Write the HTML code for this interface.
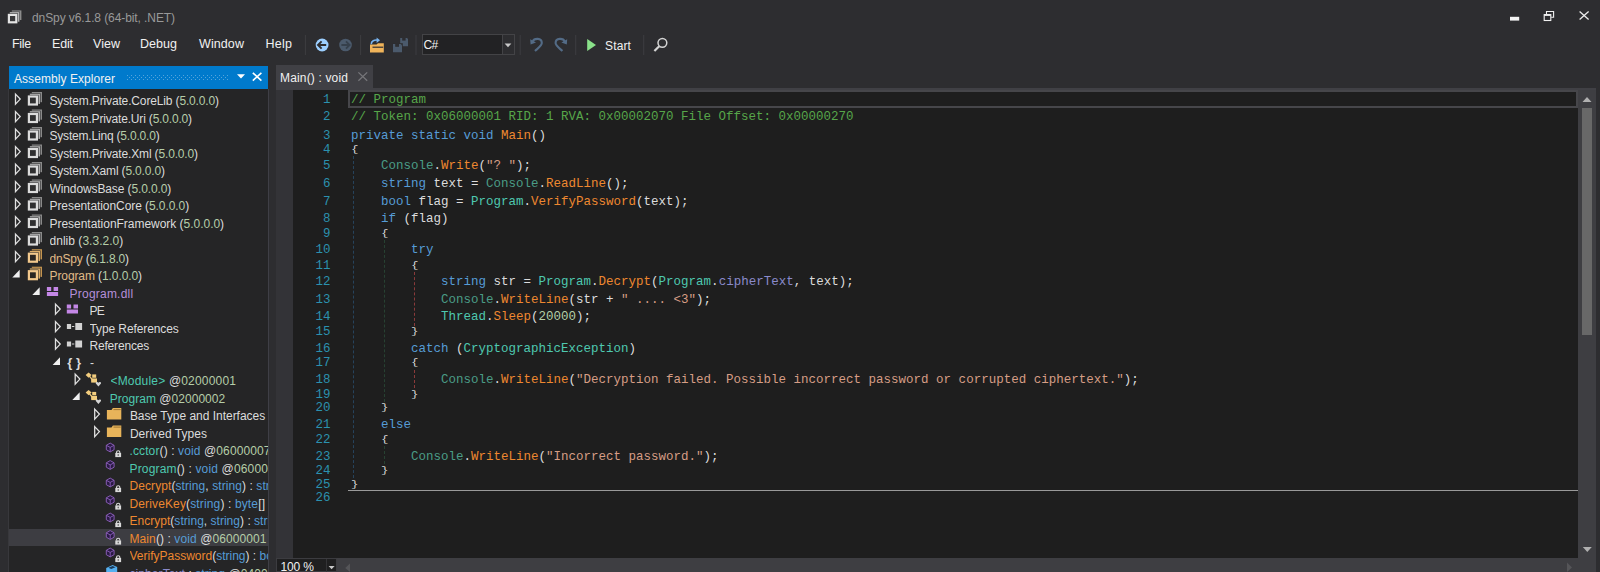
<!DOCTYPE html><html><head><meta charset="utf-8"><title>dnSpy</title><style>
html,body{margin:0;padding:0;background:#2d2d30;}
body{width:1600px;height:572px;position:relative;overflow:hidden;font-family:"Liberation Sans",sans-serif;}
.ab{position:absolute;}
.tx{position:absolute;white-space:pre;line-height:20px;height:20px;font-family:"Liberation Sans",sans-serif;}
.cd{position:absolute;white-space:pre;line-height:20px;height:20px;font-family:"Liberation Mono",monospace;font-size:12.5px;}
.num{position:absolute;white-space:pre;line-height:20px;height:20px;font-family:"Liberation Mono",monospace;font-size:12.5px;color:#2b91af;text-align:right;width:40px;left:290.5px;}

.c{color:#57a64a}
.k{color:#569cd6}
.t{color:#4ec9b0}
.T{color:#4a9c86}
.m{color:#ee8830}
.p{color:#dcdcdc}
.s{color:#d69d85}
.n{color:#b5cea8}
.f{color:#8a8acb}
.y{color:#e0bb88}
.u{color:#b58fd9}
.w{color:#f1f1f1}
.g{color:#999999}
.ln{color:#2b91af}
</style></head><body>
<div class="ab" style="left:9px;top:66px;width:259px;height:23px;background:#007acc"></div>
<div class="ab" id="tree" style="left:9px;top:89px;width:259px;height:483px;background:#252526;overflow:hidden"></div>
<div class="ab" style="left:9px;top:529px;width:259px;height:17px;background:#3d3d42"></div>
<div class="ab" style="left:268px;top:89px;width:1px;height:483px;background:#3f3f46"></div>
<div class="ab" style="left:8px;top:89px;width:1px;height:483px;background:#38383c"></div>
<div class="ab" style="left:275.5px;top:65px;width:97.5px;height:25px;background:#404045"></div>
<div class="ab" style="left:275.5px;top:88px;width:1320.5px;height:2px;background:#404045"></div>
<div class="ab" style="left:275.5px;top:90px;width:17.5px;height:468px;background:#333337"></div>
<div class="ab" style="left:293px;top:90px;width:1285px;height:468px;background:#1e1e1e"></div>
<div class="ab" style="left:348px;top:90px;width:1226px;height:14px;border:2px solid #46464a;background:#1e1e1e"></div>
<div class="ab" style="left:348px;top:490px;width:1230px;height:1px;background:#9a9a9a"></div>
<div class="ab" style="left:1578px;top:90px;width:18px;height:482px;background:#3e3e42"></div>
<div class="ab" style="left:1582px;top:107.5px;width:10px;height:227.5px;background:#686868"></div>
<div class="ab" style="left:337px;top:558px;width:1241px;height:14px;background:#3e3e42"></div>
<div class="ab" style="left:275.5px;top:558px;width:61.5px;height:14px;background:#1f1f20;border:1px solid #3c3c40;box-sizing:border-box"></div>
<div class="ab" style="left:421.5px;top:34px;width:93.5px;height:21px;background:#222224;border:1px solid #434346;box-sizing:border-box"></div>
<div class="ab" style="left:501.5px;top:35px;width:12.5px;height:19px;background:#2d2d30;border-left:1px solid #434346;box-sizing:border-box"></div>
<svg class="ab" style="left:0;top:0" width="1600" height="572" viewBox="0 0 1600 572">
<rect x="11.8" y="10.4" width="9.6" height="9.6" fill="#8c8c8c"/>
<rect x="9.3" y="11.6" width="10.6" height="10.6" fill="#2d2d30"/>
<rect x="9.8" y="12.1" width="9.6" height="9.6" fill="#b4b4b4"/>
<rect x="7.3" y="13.3" width="10.6" height="10.6" fill="#2d2d30"/>
<rect x="7.8" y="13.8" width="9.6" height="9.6" fill="#e4e4e4"/>
<rect x="10.0" y="16.0" width="5.2" height="5.2" fill="#38383a"/>
<rect x="1510" y="16.8" width="9.2" height="3.8" fill="#f4f4f4"/>
<g fill="none" stroke="#f0f0f0" stroke-width="1.1"><path d="M1546.5 14V11.5H1553.6V17.3H1551.2"/><rect x="1544.2" y="14.6" width="6.6" height="5.9"/><path d="M1544.2 15.1H1550.8" stroke-width="1.6"/></g>
<path d="M1579.6 11.6L1588.6 19.6M1588.6 11.6L1579.6 19.6" stroke="#ececec" stroke-width="1.3" fill="none"/>
<rect x="304.9" y="35" width="1" height="20" fill="#3d3d41"/>
<rect x="360.1" y="35" width="1" height="20" fill="#3d3d41"/>
<rect x="415.5" y="35" width="1" height="20" fill="#3d3d41"/>
<rect x="519.7" y="35" width="1" height="20" fill="#3d3d41"/>
<rect x="575.2" y="35" width="1" height="20" fill="#3d3d41"/>
<rect x="643.2" y="35" width="1" height="20" fill="#3d3d41"/>
<circle cx="322.1" cy="45" r="6.4" fill="#9ccfff"/>
<path d="M318.2 45H326.2M321.6 41.4L318 45L321.6 48.6" stroke="#2d2d30" stroke-width="1.9" fill="none"/>
<circle cx="345.5" cy="45" r="6.3" fill="#4b5a6c"/>
<path d="M341.4 45H349.4M346 41.4L349.6 45L346 48.6" stroke="#36404c" stroke-width="1.9" fill="none"/>
<path d="M370 52.5V44.6H376.5L378 43.2H383.8V52.5Z" fill="#f0b45a"/>
<path d="M372.5 47.2H383.2" stroke="#2d2d30" stroke-width="1.2"/>
<path d="M371.3 44.3C371 40.8 374.5 39.6 378 40.2" stroke="#78b4f0" stroke-width="1.6" fill="none"/><path d="M376.6 37.6L380 40.3L376.6 43Z" fill="#78b4f0"/>
<path d="M400.2 38H407L408 39V46.2H400.2Z" fill="#4b5a6c"/><rect x="402.2" y="38" width="3.4" height="2.6" fill="#2d2d30"/>
<rect x="392.4" y="43.2" width="10.4" height="9.6" fill="#2d2d30"/>
<path d="M393 44H400.8L402 45.2V52.2H393Z" fill="#4b5a6c"/><rect x="395.2" y="44" width="3.8" height="2.8" fill="#2d2d30"/>
<path d="M504.6 43.6H511.4L508 47.2Z" fill="#c8c8c8"/>
<path d="M532.6 41.6C534 38 541.8 37.4 541.8 43C541.8 45.6 538.2 48 535 51" stroke="#536b86" stroke-width="2.1" fill="none"/><path d="M530.2 39.2L530.6 44.6L536 42.4Z" fill="#536b86"/>
<path d="M564.8 41.6C563.4 38 555.6 37.4 555.6 43C555.6 45.6 559.2 48 562.4 51" stroke="#536b86" stroke-width="2.1" fill="none"/><path d="M567.2 39.2L566.8 44.6L561.4 42.4Z" fill="#536b86"/>
<path d="M587.2 39L596 45L587.2 51Z" fill="#8ae28a"/>
<circle cx="662.4" cy="42.8" r="4.4" fill="none" stroke="#d4d4d4" stroke-width="1.5"/><path d="M659.2 46.2L654.4 51" stroke="#d4d4d4" stroke-width="2.2"/>
<path d="M127 75h1v1h-1zM131 75h1v1h-1zM135 75h1v1h-1zM139 75h1v1h-1zM143 75h1v1h-1zM147 75h1v1h-1zM151 75h1v1h-1zM155 75h1v1h-1zM159 75h1v1h-1zM163 75h1v1h-1zM167 75h1v1h-1zM171 75h1v1h-1zM175 75h1v1h-1zM179 75h1v1h-1zM183 75h1v1h-1zM187 75h1v1h-1zM191 75h1v1h-1zM195 75h1v1h-1zM199 75h1v1h-1zM203 75h1v1h-1zM207 75h1v1h-1zM211 75h1v1h-1zM215 75h1v1h-1zM219 75h1v1h-1zM223 75h1v1h-1zM227 75h1v1h-1zM129 77h1v1h-1zM133 77h1v1h-1zM137 77h1v1h-1zM141 77h1v1h-1zM145 77h1v1h-1zM149 77h1v1h-1zM153 77h1v1h-1zM157 77h1v1h-1zM161 77h1v1h-1zM165 77h1v1h-1zM169 77h1v1h-1zM173 77h1v1h-1zM177 77h1v1h-1zM181 77h1v1h-1zM185 77h1v1h-1zM189 77h1v1h-1zM193 77h1v1h-1zM197 77h1v1h-1zM201 77h1v1h-1zM205 77h1v1h-1zM209 77h1v1h-1zM213 77h1v1h-1zM217 77h1v1h-1zM221 77h1v1h-1zM225 77h1v1h-1zM127 79h1v1h-1zM131 79h1v1h-1zM135 79h1v1h-1zM139 79h1v1h-1zM143 79h1v1h-1zM147 79h1v1h-1zM151 79h1v1h-1zM155 79h1v1h-1zM159 79h1v1h-1zM163 79h1v1h-1zM167 79h1v1h-1zM171 79h1v1h-1zM175 79h1v1h-1zM179 79h1v1h-1zM183 79h1v1h-1zM187 79h1v1h-1zM191 79h1v1h-1zM195 79h1v1h-1zM199 79h1v1h-1zM203 79h1v1h-1zM207 79h1v1h-1zM211 79h1v1h-1zM215 79h1v1h-1zM219 79h1v1h-1zM223 79h1v1h-1zM227 79h1v1h-1z" fill="#55a4dc"/>
<path d="M237 74.2H245L241 78.4Z" fill="#fff"/>
<path d="M252.8 72.8L261.4 80.6M261.4 72.8L252.8 80.6" stroke="#fff" stroke-width="1.6" fill="none"/>
<path d="M358.4 72.4L367.2 80.8M367.2 72.4L358.4 80.8" stroke="#76767a" stroke-width="1.3" fill="none"/>
<path d="M1582.5 102H1591.5L1587 97Z" fill="#b0b0b0"/>
<path d="M1582.8 547H1591.8L1587.3 552Z" fill="#b0b0b0"/>
<path d="M350 563.5V572L345.2 568Z" fill="#555558"/>
<path d="M1567 562.5V572L1572 567.5Z" fill="#555558"/>
<path d="M328.6 566H334.6L331.6 569.2Z" fill="#c8c8c8"/>
<rect x="326" y="559" width="1" height="13" fill="#333336"/>
<path d="M15.5 94.1L20.2 99.1L15.5 104.1Z" fill="none" stroke="#e0e0e0" stroke-width="1.3"/>
<path d="M15.5 111.6L20.2 116.6L15.5 121.6Z" fill="none" stroke="#e0e0e0" stroke-width="1.3"/>
<path d="M15.5 129.1L20.2 134.1L15.5 139.1Z" fill="none" stroke="#e0e0e0" stroke-width="1.3"/>
<path d="M15.5 146.6L20.2 151.6L15.5 156.6Z" fill="none" stroke="#e0e0e0" stroke-width="1.3"/>
<path d="M15.5 164.1L20.2 169.1L15.5 174.1Z" fill="none" stroke="#e0e0e0" stroke-width="1.3"/>
<path d="M15.5 181.6L20.2 186.6L15.5 191.6Z" fill="none" stroke="#e0e0e0" stroke-width="1.3"/>
<path d="M15.5 199.1L20.2 204.1L15.5 209.1Z" fill="none" stroke="#e0e0e0" stroke-width="1.3"/>
<path d="M15.5 216.6L20.2 221.6L15.5 226.6Z" fill="none" stroke="#e0e0e0" stroke-width="1.3"/>
<path d="M15.5 234.1L20.2 239.1L15.5 244.1Z" fill="none" stroke="#e0e0e0" stroke-width="1.3"/>
<path d="M15.5 251.6L20.2 256.6L15.5 261.6Z" fill="none" stroke="#e0e0e0" stroke-width="1.3"/>
<path d="M19.7 269.8V277.4H12.3Z" fill="#f0f0f0"/>
<path d="M39.7 287.3V294.9H32.3Z" fill="#f0f0f0"/>
<path d="M55.5 304.1L60.2 309.1L55.5 314.1Z" fill="none" stroke="#e0e0e0" stroke-width="1.3"/>
<path d="M55.5 321.6L60.2 326.6L55.5 331.6Z" fill="none" stroke="#e0e0e0" stroke-width="1.3"/>
<path d="M55.5 339.1L60.2 344.1L55.5 349.1Z" fill="none" stroke="#e0e0e0" stroke-width="1.3"/>
<path d="M60.0 357.3V364.9H52.6Z" fill="#f0f0f0"/>
<path d="M75.2 374.1L79.9 379.1L75.2 384.1Z" fill="none" stroke="#e0e0e0" stroke-width="1.3"/>
<path d="M79.7 392.3V399.9H72.3Z" fill="#f0f0f0"/>
<path d="M94.7 409.1L99.4 414.1L94.7 419.1Z" fill="none" stroke="#e0e0e0" stroke-width="1.3"/>
<path d="M94.7 426.6L99.4 431.6L94.7 436.6Z" fill="none" stroke="#e0e0e0" stroke-width="1.3"/>
<rect x="31.8" y="92.0" width="10.2" height="10.2" fill="#8a8a8a"/>
<rect x="29.3" y="93.2" width="11.2" height="11.2" fill="#252526"/>
<rect x="29.8" y="93.7" width="10.2" height="10.2" fill="#b0b0b0"/>
<rect x="27.3" y="94.9" width="11.2" height="11.2" fill="#252526"/>
<rect x="27.8" y="95.4" width="10.2" height="10.2" fill="#dcdcdc"/>
<rect x="30.0" y="97.6" width="5.8" height="5.8" fill="#2f2f30"/>
<rect x="31.8" y="109.5" width="10.2" height="10.2" fill="#8a8a8a"/>
<rect x="29.3" y="110.7" width="11.2" height="11.2" fill="#252526"/>
<rect x="29.8" y="111.2" width="10.2" height="10.2" fill="#b0b0b0"/>
<rect x="27.3" y="112.4" width="11.2" height="11.2" fill="#252526"/>
<rect x="27.8" y="112.9" width="10.2" height="10.2" fill="#dcdcdc"/>
<rect x="30.0" y="115.1" width="5.8" height="5.8" fill="#2f2f30"/>
<rect x="31.8" y="127.0" width="10.2" height="10.2" fill="#8a8a8a"/>
<rect x="29.3" y="128.2" width="11.2" height="11.2" fill="#252526"/>
<rect x="29.8" y="128.7" width="10.2" height="10.2" fill="#b0b0b0"/>
<rect x="27.3" y="129.9" width="11.2" height="11.2" fill="#252526"/>
<rect x="27.8" y="130.4" width="10.2" height="10.2" fill="#dcdcdc"/>
<rect x="30.0" y="132.6" width="5.8" height="5.8" fill="#2f2f30"/>
<rect x="31.8" y="144.5" width="10.2" height="10.2" fill="#8a8a8a"/>
<rect x="29.3" y="145.7" width="11.2" height="11.2" fill="#252526"/>
<rect x="29.8" y="146.2" width="10.2" height="10.2" fill="#b0b0b0"/>
<rect x="27.3" y="147.4" width="11.2" height="11.2" fill="#252526"/>
<rect x="27.8" y="147.9" width="10.2" height="10.2" fill="#dcdcdc"/>
<rect x="30.0" y="150.1" width="5.8" height="5.8" fill="#2f2f30"/>
<rect x="31.8" y="162.0" width="10.2" height="10.2" fill="#8a8a8a"/>
<rect x="29.3" y="163.2" width="11.2" height="11.2" fill="#252526"/>
<rect x="29.8" y="163.7" width="10.2" height="10.2" fill="#b0b0b0"/>
<rect x="27.3" y="164.9" width="11.2" height="11.2" fill="#252526"/>
<rect x="27.8" y="165.4" width="10.2" height="10.2" fill="#dcdcdc"/>
<rect x="30.0" y="167.6" width="5.8" height="5.8" fill="#2f2f30"/>
<rect x="31.8" y="179.5" width="10.2" height="10.2" fill="#8a8a8a"/>
<rect x="29.3" y="180.7" width="11.2" height="11.2" fill="#252526"/>
<rect x="29.8" y="181.2" width="10.2" height="10.2" fill="#b0b0b0"/>
<rect x="27.3" y="182.4" width="11.2" height="11.2" fill="#252526"/>
<rect x="27.8" y="182.9" width="10.2" height="10.2" fill="#dcdcdc"/>
<rect x="30.0" y="185.1" width="5.8" height="5.8" fill="#2f2f30"/>
<rect x="31.8" y="197.0" width="10.2" height="10.2" fill="#8a8a8a"/>
<rect x="29.3" y="198.2" width="11.2" height="11.2" fill="#252526"/>
<rect x="29.8" y="198.7" width="10.2" height="10.2" fill="#b0b0b0"/>
<rect x="27.3" y="199.9" width="11.2" height="11.2" fill="#252526"/>
<rect x="27.8" y="200.4" width="10.2" height="10.2" fill="#dcdcdc"/>
<rect x="30.0" y="202.6" width="5.8" height="5.8" fill="#2f2f30"/>
<rect x="31.8" y="214.5" width="10.2" height="10.2" fill="#8a8a8a"/>
<rect x="29.3" y="215.7" width="11.2" height="11.2" fill="#252526"/>
<rect x="29.8" y="216.2" width="10.2" height="10.2" fill="#b0b0b0"/>
<rect x="27.3" y="217.4" width="11.2" height="11.2" fill="#252526"/>
<rect x="27.8" y="217.9" width="10.2" height="10.2" fill="#dcdcdc"/>
<rect x="30.0" y="220.1" width="5.8" height="5.8" fill="#2f2f30"/>
<rect x="31.8" y="232.0" width="10.2" height="10.2" fill="#8a8a8a"/>
<rect x="29.3" y="233.2" width="11.2" height="11.2" fill="#252526"/>
<rect x="29.8" y="233.7" width="10.2" height="10.2" fill="#b0b0b0"/>
<rect x="27.3" y="234.9" width="11.2" height="11.2" fill="#252526"/>
<rect x="27.8" y="235.4" width="10.2" height="10.2" fill="#dcdcdc"/>
<rect x="30.0" y="237.6" width="5.8" height="5.8" fill="#2f2f30"/>
<rect x="31.8" y="249.2" width="10.2" height="10.2" fill="#c49550"/>
<rect x="29.3" y="250.4" width="11.2" height="11.2" fill="#252526"/>
<rect x="29.8" y="250.9" width="10.2" height="10.2" fill="#dcae6a"/>
<rect x="27.3" y="252.1" width="11.2" height="11.2" fill="#252526"/>
<rect x="27.8" y="252.6" width="10.2" height="10.2" fill="#f2c88c"/>
<rect x="30.0" y="254.8" width="5.8" height="5.8" fill="#2a2622"/>
<rect x="31.8" y="266.7" width="10.2" height="10.2" fill="#c49550"/>
<rect x="29.3" y="267.9" width="11.2" height="11.2" fill="#252526"/>
<rect x="29.8" y="268.4" width="10.2" height="10.2" fill="#dcae6a"/>
<rect x="27.3" y="269.6" width="11.2" height="11.2" fill="#252526"/>
<rect x="27.8" y="270.1" width="10.2" height="10.2" fill="#f2c88c"/>
<rect x="30.0" y="272.3" width="5.8" height="5.8" fill="#2a2622"/>
<path d="M46.9 286.9h4.3v4.2h-4.3zM53.6 286.9h4.5v4.2h-4.5zM46.9 292.09999999999997h11.2v4h-11.2z" fill="#c487e6"/>
<path d="M66.8 304.4h4.3v4.2h-4.3zM73.5 304.4h4.5v4.2h-4.5zM66.8 309.59999999999997h11.2v4h-11.2z" fill="#c487e6"/>
<path d="M66.9 323.9h4.2v5h-4.2zM71.9 325.9h2.4v1h-2.4zM75.30000000000001 322.9h6.8v7h-6.8z" fill="#d2d2d2"/>
<path d="M66.9 341.4h4.2v5h-4.2zM71.9 343.4h2.4v1h-2.4zM75.30000000000001 340.4h6.8v7h-6.8z" fill="#d2d2d2"/>
<g fill="#f2cd7e"><path d="M88.6 372.4l3 2.6l-3 2.8l-3-2.8z"/><path d="M92.2 374.4h4v3.4h-4z"/><path d="M91.2 378.4h5.8v4.2h-5.8z"/><path d="M89.4 375.0l3.6 4.4v2h-1.4v-1.6l-3.2-3.8z"/></g>
<path d="M98.4 386.4l-2.6-2.8c-0.6-1.6 1.8-2.2 2.6-0.8c0.8-1.4 3.2-0.8 2.6 0.8z" fill="#d4d4d4"/>
<g fill="#f2cd7e"><path d="M88.6 389.9l3 2.6l-3 2.8l-3-2.8z"/><path d="M92.2 391.9h4v3.4h-4z"/><path d="M91.2 395.9h5.8v4.2h-5.8z"/><path d="M89.4 392.5l3.6 4.4v2h-1.4v-1.6l-3.2-3.8z"/></g>
<path d="M98.4 403.9l-2.6-2.8c-0.6-1.6 1.8-2.2 2.6-0.8c0.8-1.4 3.2-0.8 2.6 0.8z" fill="#d4d4d4"/>
<path d="M106.9 419.5V409.9H111.5L112.9 408.0H121.3V419.5Z" fill="#e8b45a"/>
<path d="M113.5 409.6H120.7" stroke="#8a6428" stroke-width="0.8"/>
<path d="M106.9 437.0V427.4H111.5L112.9 425.5H121.3V437.0Z" fill="#e8b45a"/>
<path d="M113.5 427.1H120.7" stroke="#8a6428" stroke-width="0.8"/>
<path d="M110.2 443.1L114.1 445.3V449.7L110.2 451.9L106.3 449.7V445.3Z" fill="#2a1a44" stroke="#9666c6" stroke-width="0.85" stroke-linejoin="round"/>
<path d="M106.5 445.4L110.2 447.4L113.9 445.4M110.2 447.4V451.8" fill="none" stroke="#9666c6" stroke-width="0.8"/>
<rect x="115.3" y="452.9" width="5.8" height="4.2" fill="#dadada"/>
<path d="M116.6 453.1V451.9C116.6 450.3 119.8 450.3 119.8 451.9V453.1" fill="none" stroke="#dadada" stroke-width="1.1"/>
<rect x="117.7" y="454.2" width="1" height="1.6" fill="#444"/>
<path d="M110.2 460.6L114.1 462.8V467.2L110.2 469.4L106.3 467.2V462.8Z" fill="#2a1a44" stroke="#9666c6" stroke-width="0.85" stroke-linejoin="round"/>
<path d="M106.5 462.9L110.2 464.9L113.9 462.9M110.2 464.9V469.3" fill="none" stroke="#9666c6" stroke-width="0.8"/>
<path d="M110.2 478.1L114.1 480.3V484.7L110.2 486.9L106.3 484.7V480.3Z" fill="#2a1a44" stroke="#9666c6" stroke-width="0.85" stroke-linejoin="round"/>
<path d="M106.5 480.4L110.2 482.4L113.9 480.4M110.2 482.4V486.8" fill="none" stroke="#9666c6" stroke-width="0.8"/>
<rect x="115.3" y="487.9" width="5.8" height="4.2" fill="#dadada"/>
<path d="M116.6 488.1V486.9C116.6 485.3 119.8 485.3 119.8 486.9V488.1" fill="none" stroke="#dadada" stroke-width="1.1"/>
<rect x="117.7" y="489.2" width="1" height="1.6" fill="#444"/>
<path d="M110.2 495.6L114.1 497.8V502.2L110.2 504.4L106.3 502.2V497.8Z" fill="#2a1a44" stroke="#9666c6" stroke-width="0.85" stroke-linejoin="round"/>
<path d="M106.5 497.9L110.2 499.9L113.9 497.9M110.2 499.9V504.3" fill="none" stroke="#9666c6" stroke-width="0.8"/>
<rect x="115.3" y="505.4" width="5.8" height="4.2" fill="#dadada"/>
<path d="M116.6 505.6V504.4C116.6 502.8 119.8 502.8 119.8 504.4V505.6" fill="none" stroke="#dadada" stroke-width="1.1"/>
<rect x="117.7" y="506.7" width="1" height="1.6" fill="#444"/>
<path d="M110.2 513.1L114.1 515.3V519.7L110.2 521.9L106.3 519.7V515.3Z" fill="#2a1a44" stroke="#9666c6" stroke-width="0.85" stroke-linejoin="round"/>
<path d="M106.5 515.4L110.2 517.4L113.9 515.4M110.2 517.4V521.8" fill="none" stroke="#9666c6" stroke-width="0.8"/>
<rect x="115.3" y="522.9" width="5.8" height="4.2" fill="#dadada"/>
<path d="M116.6 523.1V521.9C116.6 520.3 119.8 520.3 119.8 521.9V523.1" fill="none" stroke="#dadada" stroke-width="1.1"/>
<rect x="117.7" y="524.2" width="1" height="1.6" fill="#444"/>
<path d="M110.2 530.6L114.1 532.8V537.2L110.2 539.4L106.3 537.2V532.8Z" fill="#2a1a44" stroke="#9666c6" stroke-width="0.85" stroke-linejoin="round"/>
<path d="M106.5 532.9L110.2 534.9L113.9 532.9M110.2 534.9V539.3" fill="none" stroke="#9666c6" stroke-width="0.8"/>
<rect x="115.3" y="540.4" width="5.8" height="4.2" fill="#dadada"/>
<path d="M116.6 540.6V539.4C116.6 537.8 119.8 537.8 119.8 539.4V540.6" fill="none" stroke="#dadada" stroke-width="1.1"/>
<rect x="117.7" y="541.7" width="1" height="1.6" fill="#444"/>
<path d="M110.2 548.1L114.1 550.3V554.7L110.2 556.9L106.3 554.7V550.3Z" fill="#2a1a44" stroke="#9666c6" stroke-width="0.85" stroke-linejoin="round"/>
<path d="M106.5 550.4L110.2 552.4L113.9 550.4M110.2 552.4V556.8" fill="none" stroke="#9666c6" stroke-width="0.8"/>
<rect x="115.3" y="557.9" width="5.8" height="4.2" fill="#dadada"/>
<path d="M116.6 558.1V556.9C116.6 555.3 119.8 555.3 119.8 556.9V558.1" fill="none" stroke="#dadada" stroke-width="1.1"/>
<rect x="117.7" y="559.2" width="1" height="1.6" fill="#444"/>
<path d="M106.2 567.9L112.6 565.1L117.2 566.9V574.5L110.8 577.3L106.2 575.5Z" fill="#55b0f0"/><path d="M108.4 567.7L112.6 566.1L115.6 567.3L111.2 569.1Z" fill="#1c3a58"/>
</svg>
<div class="ab" style="left:353px;top:156px;width:0;height:322px;border-left:1px dashed #26435c"></div>
<div class="ab" style="left:384px;top:240px;width:0;height:162px;border-left:1px dashed #274232"></div>
<div class="ab" style="left:384px;top:446px;width:0;height:18px;border-left:1px dashed #274232"></div>
<div class="ab" style="left:414px;top:272px;width:0;height:54px;border-left:1px dashed #8a3a3a"></div>
<div class="ab" style="left:414px;top:370px;width:0;height:18px;border-left:1px dashed #8a3a3a"></div>
<div class="tx" id="t0" style="left:32px;top:8.34px;font-size:12px;letter-spacing:-0.091px;"><span class="g">dnSpy v6.1.8 (64-bit, .NET)</span></div>
<div class="tx" id="t1" style="left:12px;top:33.87px;font-size:12.5px;letter-spacing:-0.330px;"><span class="w">File</span></div>
<div class="tx" id="t2" style="left:52px;top:33.87px;font-size:12.5px;letter-spacing:-0.156px;"><span class="w">Edit</span></div>
<div class="tx" id="t3" style="left:93px;top:33.87px;font-size:12.5px;letter-spacing:0.036px;"><span class="w">View</span></div>
<div class="tx" id="t4" style="left:140px;top:33.87px;font-size:12.5px;letter-spacing:0.035px;"><span class="w">Debug</span></div>
<div class="tx" id="t5" style="left:199px;top:33.87px;font-size:12.5px;letter-spacing:0.097px;"><span class="w">Window</span></div>
<div class="tx" id="t6" style="left:265.5px;top:33.87px;font-size:12.5px;letter-spacing:0.223px;"><span class="w">Help</span></div>
<div class="tx" id="t7" style="left:423.5px;top:34.54px;font-size:12px;letter-spacing:-0.562px;"><span class="w">C#</span></div>
<div class="tx" id="t8" style="left:605px;top:35.54px;font-size:12px;letter-spacing:0.146px;"><span class="w">Start</span></div>
<div class="tx" id="t9" style="left:14px;top:68.94px;font-size:12px;letter-spacing:0.059px;"><span class="w">Assembly Explorer</span></div>
<div class="tx" id="t10" style="left:280px;top:68.04px;font-size:12px;letter-spacing:0.158px;"><span class="w">Main() : void</span></div>
<div class="tx" id="t11" style="left:280.6px;top:556.54px;font-size:12px;letter-spacing:-0.185px;width:-12.600000000000023px;overflow:hidden;"><span class="w">100 %</span></div>
<div class="tx" id="t12" style="left:49.5px;top:91.14px;font-size:12px;letter-spacing:-0.146px;width:218.5px;overflow:hidden;"><span class="p">System.Private.CoreLib (</span><span class="n">5.0.0.0</span><span class="p">)</span></div>
<div class="tx" id="t13" style="left:49.5px;top:108.64px;font-size:12px;letter-spacing:-0.178px;width:218.5px;overflow:hidden;"><span class="p">System.Private.Uri (</span><span class="n">5.0.0.0</span><span class="p">)</span></div>
<div class="tx" id="t14" style="left:49.5px;top:126.14px;font-size:12px;letter-spacing:-0.193px;width:218.5px;overflow:hidden;"><span class="p">System.Linq (</span><span class="n">5.0.0.0</span><span class="p">)</span></div>
<div class="tx" id="t15" style="left:49.5px;top:143.64px;font-size:12px;letter-spacing:-0.154px;width:218.5px;overflow:hidden;"><span class="p">System.Private.Xml (</span><span class="n">5.0.0.0</span><span class="p">)</span></div>
<div class="tx" id="t16" style="left:49.5px;top:161.14px;font-size:12px;letter-spacing:-0.162px;width:218.5px;overflow:hidden;"><span class="p">System.Xaml (</span><span class="n">5.0.0.0</span><span class="p">)</span></div>
<div class="tx" id="t17" style="left:49.5px;top:178.64px;font-size:12px;letter-spacing:-0.111px;width:218.5px;overflow:hidden;"><span class="p">WindowsBase (</span><span class="n">5.0.0.0</span><span class="p">)</span></div>
<div class="tx" id="t18" style="left:49.5px;top:196.14px;font-size:12px;letter-spacing:-0.068px;width:218.5px;overflow:hidden;"><span class="p">PresentationCore (</span><span class="n">5.0.0.0</span><span class="p">)</span></div>
<div class="tx" id="t19" style="left:49.5px;top:213.64px;font-size:12px;letter-spacing:-0.027px;width:218.5px;overflow:hidden;"><span class="p">PresentationFramework (</span><span class="n">5.0.0.0</span><span class="p">)</span></div>
<div class="tx" id="t20" style="left:49.5px;top:231.14px;font-size:12px;letter-spacing:0.028px;width:218.5px;overflow:hidden;"><span class="p">dnlib (</span><span class="n">3.3.2.0</span><span class="p">)</span></div>
<div class="tx" id="t21" style="left:49.5px;top:248.64px;font-size:12px;letter-spacing:-0.178px;width:218.5px;overflow:hidden;"><span class="y">dnSpy</span><span class="p"> (</span><span class="n">6.1.8.0</span><span class="p">)</span></div>
<div class="tx" id="t22" style="left:49.5px;top:266.14px;font-size:12px;letter-spacing:-0.095px;width:218.5px;overflow:hidden;"><span class="y">Program</span><span class="p"> (</span><span class="n">1.0.0.0</span><span class="p">)</span></div>
<div class="tx" id="t23" style="left:69.6px;top:283.64px;font-size:12px;letter-spacing:0.213px;width:198.4px;overflow:hidden;"><span class="u">Program.dll</span></div>
<div class="tx" id="t24" style="left:89.5px;top:301.14px;font-size:12px;letter-spacing:-0.700px;width:178.5px;overflow:hidden;"><span class="p">PE</span></div>
<div class="tx" id="t25" style="left:89.5px;top:318.64px;font-size:12px;letter-spacing:-0.105px;width:178.5px;overflow:hidden;"><span class="p">Type References</span></div>
<div class="tx" id="t26" style="left:89.5px;top:336.14px;font-size:12px;letter-spacing:-0.187px;width:178.5px;overflow:hidden;"><span class="p">References</span></div>
<div class="tx" id="t27" style="left:90px;top:353.14px;font-size:12px;letter-spacing:0.000px;width:178px;overflow:hidden;"><span class="p">-</span></div>
<div class="tx" id="t28" style="left:67.2px;top:352.70px;font-size:13px;letter-spacing:0.106px;width:200.8px;overflow:hidden;font-weight:bold;"><span class="p">{ }</span></div>
<div class="tx" id="t29" style="left:110.5px;top:371.14px;font-size:12px;letter-spacing:0.184px;width:157.5px;overflow:hidden;"><span class="t">&lt;Module&gt;</span><span class="p"> @</span><span class="n">02000001</span></div>
<div class="tx" id="t30" style="left:109.7px;top:388.64px;font-size:12px;letter-spacing:0.035px;width:158.3px;overflow:hidden;"><span class="t">Program</span><span class="p"> @</span><span class="n">02000002</span></div>
<div class="tx" id="t31" style="left:129.9px;top:406.14px;font-size:12px;letter-spacing:-0.024px;width:138.1px;overflow:hidden;"><span class="p">Base Type and Interfaces</span></div>
<div class="tx" id="t32" style="left:129.9px;top:423.64px;font-size:12px;letter-spacing:0.057px;width:138.1px;overflow:hidden;"><span class="p">Derived Types</span></div>
<div class="tx" id="t33" style="left:129.5px;top:441.14px;font-size:12px;letter-spacing:0.113px;width:138.5px;overflow:hidden;"><span class="t">.cctor</span><span class="p">() : </span><span class="k">void</span><span class="p"> @</span><span class="n">06000007</span></div>
<div class="tx" id="t34" style="left:129.5px;top:458.64px;font-size:12px;letter-spacing:0.159px;width:138.5px;overflow:hidden;"><span class="t">Program</span><span class="p">() : </span><span class="k">void</span><span class="p"> @</span><span class="n">06000008</span></div>
<div class="tx" id="t35" style="left:129.5px;top:476.14px;font-size:12px;letter-spacing:0.080px;width:138.5px;overflow:hidden;"><span class="m">Decrypt</span><span class="p">(</span><span class="k">string</span><span class="p">, </span><span class="k">string</span><span class="p">) : </span><span class="k">string</span><span class="p"> @</span><span class="n">06000004</span></div>
<div class="tx" id="t36" style="left:129.5px;top:493.64px;font-size:12px;letter-spacing:0.135px;width:138.5px;overflow:hidden;"><span class="m">DeriveKey</span><span class="p">(</span><span class="k">string</span><span class="p">) : </span><span class="k">byte</span><span class="p">[] @</span><span class="n">06000005</span></div>
<div class="tx" id="t37" style="left:129.5px;top:511.14px;font-size:12px;letter-spacing:0.020px;width:138.5px;overflow:hidden;"><span class="m">Encrypt</span><span class="p">(</span><span class="k">string</span><span class="p">, </span><span class="k">string</span><span class="p">) : </span><span class="k">string</span><span class="p"> @</span><span class="n">06000003</span></div>
<div class="tx" id="t38" style="left:129.5px;top:528.64px;font-size:12px;letter-spacing:0.092px;width:138.5px;overflow:hidden;"><span class="m">Main</span><span class="p">() : </span><span class="k">void</span><span class="p"> @</span><span class="n">06000001</span></div>
<div class="tx" id="t39" style="left:129.5px;top:546.14px;font-size:12px;letter-spacing:-0.002px;width:138.5px;overflow:hidden;"><span class="m">VerifyPassword</span><span class="p">(</span><span class="k">string</span><span class="p">) : </span><span class="k">bool</span><span class="p"> @</span><span class="n">06000002</span></div>
<div class="tx" id="t40" style="left:129.5px;top:563.64px;font-size:12px;letter-spacing:0.078px;width:138.5px;overflow:hidden;"><span class="f">cipherText</span><span class="p"> : </span><span class="k">string</span><span class="p"> @</span><span class="n">04000001</span></div>
<div class="num" style="top:89.77px;transform:scaleY(.97);transform-origin:0 13.33px">1</div>
<div class="cd" style="left:351.0px;top:89.77px;transform:scaleY(.97);transform-origin:0 13.33px;"><span class="c">// Program</span></div>
<div class="num" style="top:106.77px;transform:scaleY(.97);transform-origin:0 13.33px">2</div>
<div class="cd" style="left:351.0px;top:106.77px;transform:scaleY(.97);transform-origin:0 13.33px;"><span class="c">// Token: 0x06000001 RID: 1 RVA: 0x00002070 File Offset: 0x00000270</span></div>
<div class="num" style="top:125.57px;transform:scaleY(.97);transform-origin:0 13.33px">3</div>
<div class="cd" style="left:351.0px;top:125.57px;transform:scaleY(.97);transform-origin:0 13.33px;"><span class="k">private static void </span><span class="m">Main</span><span class="p">()</span></div>
<div class="num" style="top:139.57px;transform:scaleY(.97);transform-origin:0 13.33px">4</div>
<div class="cd" style="left:351.0px;top:139.57px;transform:translateY(-1.4px) scaleY(.78);transform-origin:0 16px;"><span class="p">{</span></div>
<div class="num" style="top:156.07px;transform:scaleY(.97);transform-origin:0 13.33px">5</div>
<div class="cd" style="left:381.0px;top:156.07px;transform:scaleY(.97);transform-origin:0 13.33px;"><span class="T">Console</span><span class="p">.</span><span class="m">Write</span><span class="p">(</span><span class="s">&quot;? &quot;</span><span class="p">);</span></div>
<div class="num" style="top:173.57px;transform:scaleY(.97);transform-origin:0 13.33px">6</div>
<div class="cd" style="left:381.0px;top:173.57px;transform:scaleY(.97);transform-origin:0 13.33px;"><span class="k">string</span><span class="p"> text = </span><span class="T">Console</span><span class="p">.</span><span class="m">ReadLine</span><span class="p">();</span></div>
<div class="num" style="top:191.97px;transform:scaleY(.97);transform-origin:0 13.33px">7</div>
<div class="cd" style="left:381.0px;top:191.97px;transform:scaleY(.97);transform-origin:0 13.33px;"><span class="k">bool</span><span class="p"> flag = </span><span class="t">Program</span><span class="p">.</span><span class="m">VerifyPassword</span><span class="p">(text);</span></div>
<div class="num" style="top:209.47px;transform:scaleY(.97);transform-origin:0 13.33px">8</div>
<div class="cd" style="left:381.0px;top:209.47px;transform:scaleY(.97);transform-origin:0 13.33px;"><span class="k">if</span><span class="p"> (flag)</span></div>
<div class="num" style="top:223.77px;transform:scaleY(.97);transform-origin:0 13.33px">9</div>
<div class="cd" style="left:381.0px;top:223.77px;transform:translateY(-1.4px) scaleY(.78);transform-origin:0 16px;"><span class="p">{</span></div>
<div class="num" style="top:240.07px;transform:scaleY(.97);transform-origin:0 13.33px">10</div>
<div class="cd" style="left:411.0px;top:240.07px;transform:scaleY(.97);transform-origin:0 13.33px;"><span class="k">try</span></div>
<div class="num" style="top:255.57px;transform:scaleY(.97);transform-origin:0 13.33px">11</div>
<div class="cd" style="left:411.0px;top:255.57px;transform:translateY(-1.4px) scaleY(.78);transform-origin:0 16px;"><span class="p">{</span></div>
<div class="num" style="top:271.97px;transform:scaleY(.97);transform-origin:0 13.33px">12</div>
<div class="cd" style="left:441.0px;top:271.97px;transform:scaleY(.97);transform-origin:0 13.33px;"><span class="k">string</span><span class="p"> str = </span><span class="t">Program</span><span class="p">.</span><span class="m">Decrypt</span><span class="p">(</span><span class="t">Program</span><span class="p">.</span><span class="f">cipherText</span><span class="p">, text);</span></div>
<div class="num" style="top:289.87px;transform:scaleY(.97);transform-origin:0 13.33px">13</div>
<div class="cd" style="left:441.0px;top:289.87px;transform:scaleY(.97);transform-origin:0 13.33px;"><span class="T">Console</span><span class="p">.</span><span class="m">WriteLine</span><span class="p">(str + </span><span class="s">&quot; .... &lt;3&quot;</span><span class="p">);</span></div>
<div class="num" style="top:306.97px;transform:scaleY(.97);transform-origin:0 13.33px">14</div>
<div class="cd" style="left:441.0px;top:306.97px;transform:scaleY(.97);transform-origin:0 13.33px;"><span class="t">Thread</span><span class="p">.</span><span class="m">Sleep</span><span class="p">(</span><span class="n">20000</span><span class="p">);</span></div>
<div class="num" style="top:321.77px;transform:scaleY(.97);transform-origin:0 13.33px">15</div>
<div class="cd" style="left:411.0px;top:321.77px;transform:translateY(-1.4px) scaleY(.78);transform-origin:0 16px;"><span class="p">}</span></div>
<div class="num" style="top:338.67px;transform:scaleY(.97);transform-origin:0 13.33px">16</div>
<div class="cd" style="left:411.0px;top:338.67px;transform:scaleY(.97);transform-origin:0 13.33px;"><span class="k">catch</span><span class="p"> (</span><span class="t">CryptographicException</span><span class="p">)</span></div>
<div class="num" style="top:353.17px;transform:scaleY(.97);transform-origin:0 13.33px">17</div>
<div class="cd" style="left:411.0px;top:353.17px;transform:translateY(-1.4px) scaleY(.78);transform-origin:0 16px;"><span class="p">{</span></div>
<div class="num" style="top:370.07px;transform:scaleY(.97);transform-origin:0 13.33px">18</div>
<div class="cd" style="left:441.0px;top:370.07px;transform:scaleY(.97);transform-origin:0 13.33px;"><span class="T">Console</span><span class="p">.</span><span class="m">WriteLine</span><span class="p">(</span><span class="s">&quot;Decryption failed. Possible incorrect password or corrupted ciphertext.&quot;</span><span class="p">);</span></div>
<div class="num" style="top:384.57px;transform:scaleY(.97);transform-origin:0 13.33px">19</div>
<div class="cd" style="left:411.0px;top:384.57px;transform:translateY(-1.4px) scaleY(.78);transform-origin:0 16px;"><span class="p">}</span></div>
<div class="num" style="top:398.47px;transform:scaleY(.97);transform-origin:0 13.33px">20</div>
<div class="cd" style="left:381.0px;top:398.47px;transform:translateY(-1.4px) scaleY(.78);transform-origin:0 16px;"><span class="p">}</span></div>
<div class="num" style="top:414.67px;transform:scaleY(.97);transform-origin:0 13.33px">21</div>
<div class="cd" style="left:381.0px;top:414.67px;transform:scaleY(.97);transform-origin:0 13.33px;"><span class="k">else</span></div>
<div class="num" style="top:429.97px;transform:scaleY(.97);transform-origin:0 13.33px">22</div>
<div class="cd" style="left:381.0px;top:429.97px;transform:translateY(-1.4px) scaleY(.78);transform-origin:0 16px;"><span class="p">{</span></div>
<div class="num" style="top:446.57px;transform:scaleY(.97);transform-origin:0 13.33px">23</div>
<div class="cd" style="left:411.0px;top:446.57px;transform:scaleY(.97);transform-origin:0 13.33px;"><span class="T">Console</span><span class="p">.</span><span class="m">WriteLine</span><span class="p">(</span><span class="s">&quot;Incorrect password.&quot;</span><span class="p">);</span></div>
<div class="num" style="top:460.57px;transform:scaleY(.97);transform-origin:0 13.33px">24</div>
<div class="cd" style="left:381.0px;top:460.57px;transform:translateY(-1.4px) scaleY(.78);transform-origin:0 16px;"><span class="p">}</span></div>
<div class="num" style="top:474.57px;transform:scaleY(.97);transform-origin:0 13.33px">25</div>
<div class="cd" style="left:351.0px;top:474.57px;transform:translateY(-1.4px) scaleY(.78);transform-origin:0 16px;"><span class="p">}</span></div>
<div class="num" style="top:488.07px;transform:scaleY(.97);transform-origin:0 13.33px">26</div>
</body></html>
